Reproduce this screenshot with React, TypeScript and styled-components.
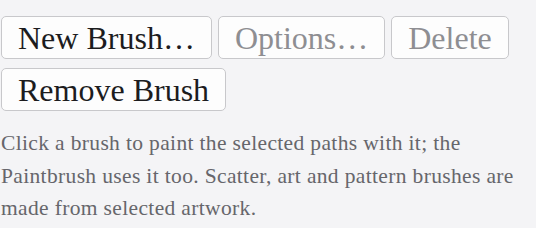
import React from "react";
import styled, { createGlobalStyle } from "styled-components";

const Global = createGlobalStyle`
  html, body {
    margin: 0;
    padding: 0;
    background: #f4f4f6;
  }
  body {
    font-family: "Liberation Serif", "Times New Roman", serif;
  }
`;

const Panel = styled.div`
  padding: 16px 1px 0 1px;
`;

const Toolbar = styled.div`
  display: flex;
  flex-wrap: wrap;
  column-gap: 6px;
  row-gap: 9px;
`;

const Button = styled.button<{ $disabled?: boolean }>`
  font-family: "Liberation Serif", "Times New Roman", serif;
  font-size: 32px;
  line-height: 36px;
  height: 43px;
  padding: 2px 16px;
  background: #fdfdfd;
  color: ${(p) => (p.$disabled ? "#8e8e92" : "#1c1c1e")};
  border: 1.5px solid #c8c8cb;
  border-radius: 5px;
  cursor: ${(p) => (p.$disabled ? "default" : "pointer")};
`;

const Hint = styled.p`
  margin: 16px 0 0 0;
  font-size: 21.5px;
  letter-spacing: 0.35px;
  line-height: 32.5px;
  color: #66666b;
`;

export default function App() {
  return (
    <>
      <Global />
      <Panel>
        <Toolbar>
          <Button>New Brush…</Button>
          <Button $disabled disabled>
            Options…
          </Button>
          <Button $disabled disabled>
            Delete
          </Button>
          <Button>Remove Brush</Button>
        </Toolbar>
        <Hint>
          Click a brush to paint the selected paths with it; the Paintbrush uses
          it too. Scatter, art and pattern brushes are made from selected
          artwork.
        </Hint>
      </Panel>
    </>
  );
}
